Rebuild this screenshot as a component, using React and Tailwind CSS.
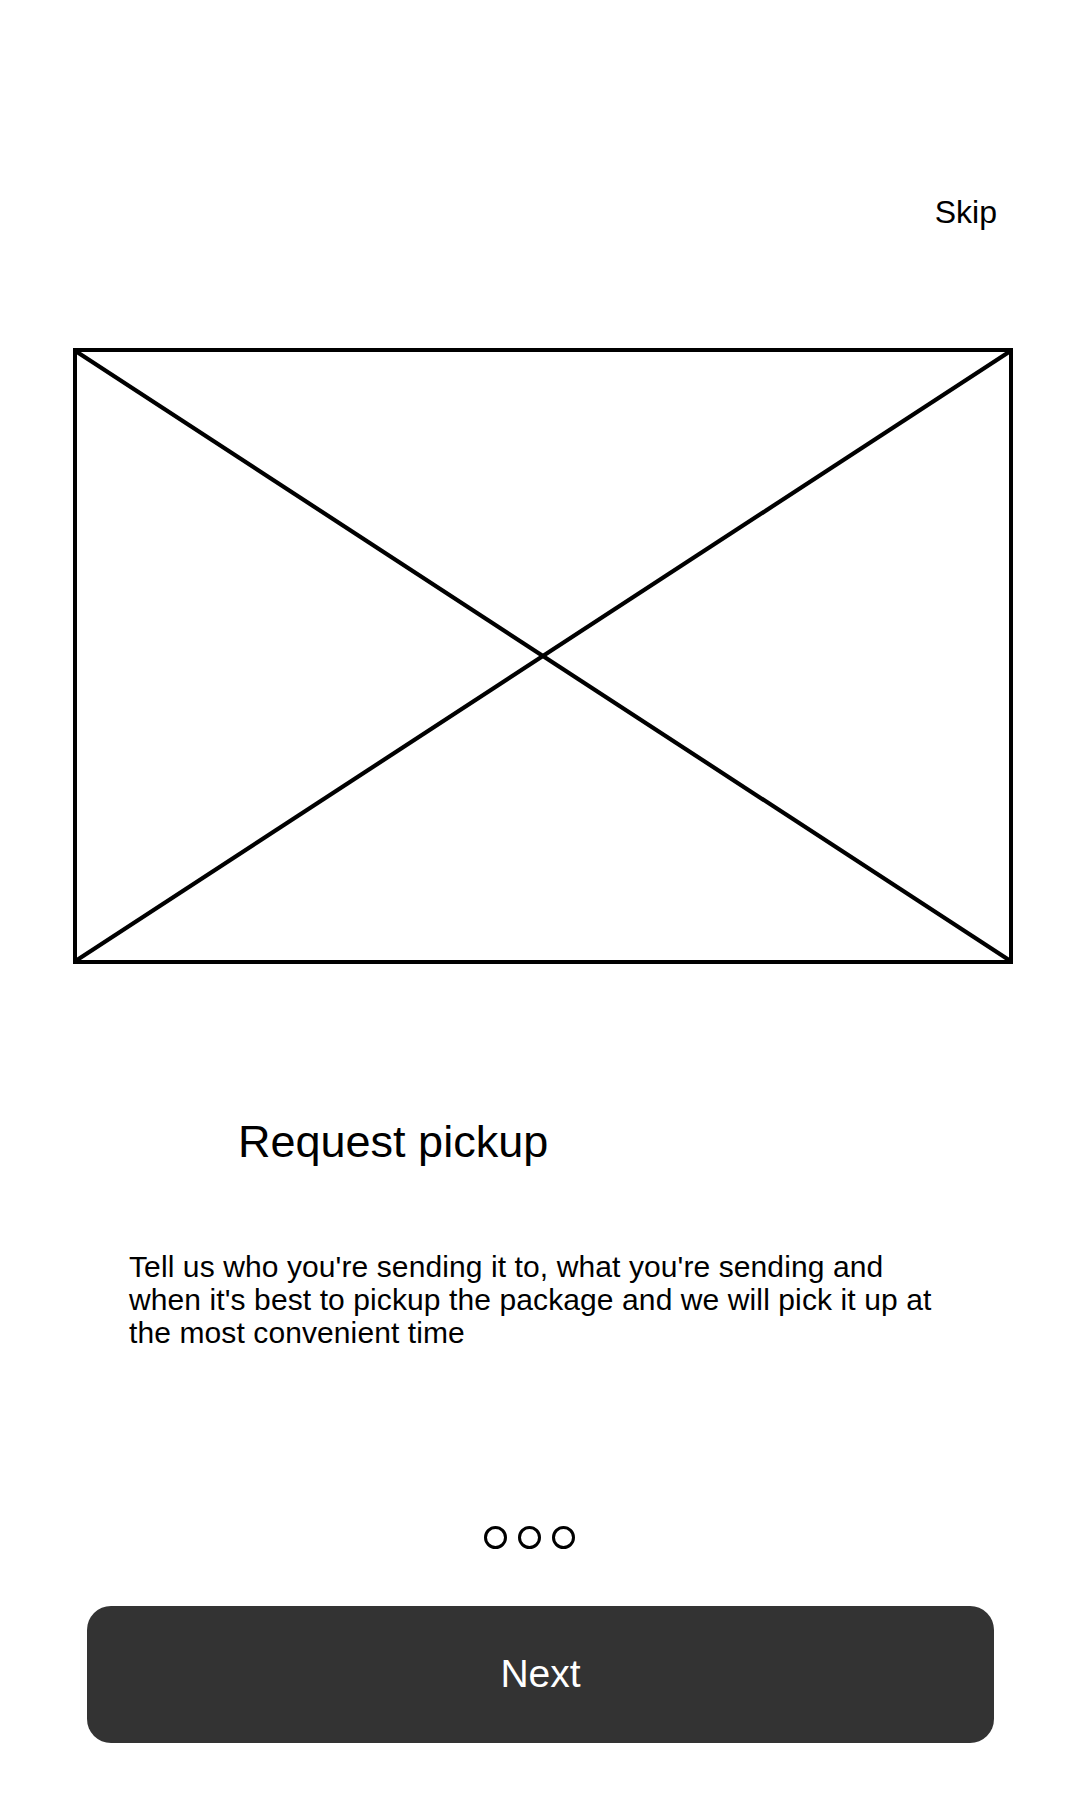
import React from "react";

function PlaceholderImage() {
  // wireframe image box with crossed diagonals
  return (
    <div className="ml-[73px] mt-[120px] h-[616px] w-[940px] border-4 border-black">
      <svg className="block h-full w-full" viewBox="0 0 932 608" preserveAspectRatio="none">
        <line x1="0" y1="0" x2="932" y2="608" stroke="#000" strokeWidth="4.2" />
        <line x1="932" y1="0" x2="0" y2="608" stroke="#000" strokeWidth="4.2" />
      </svg>
    </div>
  );
}

function Dots() {
  return (
    <div className="ml-[484px] mt-[177px] flex gap-[11px]">
      <span className="h-[23px] w-[23px] rounded-full border-[3px] border-black" />
      <span className="h-[23px] w-[23px] rounded-full border-[3px] border-black" />
      <span className="h-[23px] w-[23px] rounded-full border-[3px] border-black" />
    </div>
  );
}

export default function App() {
  return (
    <div className="flex h-[1800px] w-[1080px] flex-col bg-white font-['Liberation_Sans',Arial,sans-serif] text-black">
      <div className="flex justify-end pr-[83px] pt-[196px]">
        <button className="text-[32px] leading-none">Skip</button>
      </div>

      <PlaceholderImage />

      <h1 className="ml-[238px] mt-[155px] text-[45px] font-normal leading-none">Request pickup</h1>

      <p className="ml-[129px] mt-[86px] w-[812px] text-[30px] leading-[33px] tracking-[0.1px]">
        Tell us who you're sending it to, what you're sending and when it's best to pickup the package and we will pick it up at the most convenient time
      </p>

      <Dots />

      <button className="ml-[87px] mt-[57px] flex h-[137px] w-[907px] items-center justify-center rounded-[24px] bg-[#333333] text-[39px] text-white">
        Next
      </button>
    </div>
  );
}
